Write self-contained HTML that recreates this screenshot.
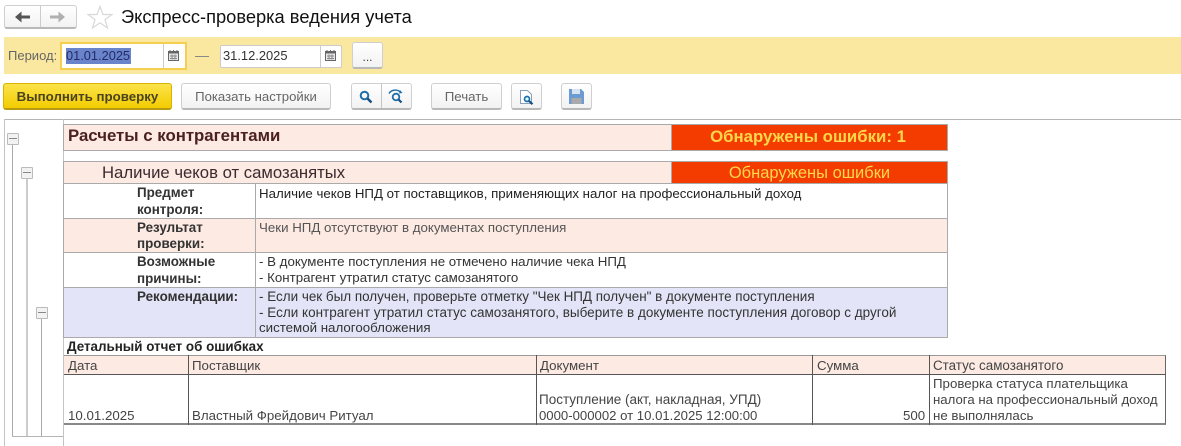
<!DOCTYPE html>
<html><head><meta charset="utf-8">
<style>
html,body{margin:0;padding:0;background:#fff;}
body{width:1181px;height:446px;position:relative;overflow:hidden;font-family:"Liberation Sans",sans-serif;font-size:13.300px;color:#333;}
#w{position:absolute;left:0;top:0;width:1181px;height:446px;filter:blur(0.3px);}
.a{position:absolute;box-sizing:border-box;}
.t{position:absolute;white-space:nowrap;line-height:16px;}
.btn{position:absolute;box-sizing:border-box;background:linear-gradient(#fff,#f2f2f2);border:1px solid #cfcfcf;border-bottom:2px solid #b8b8b8;border-radius:3px;text-align:center;color:#666;}
.b{font-weight:bold;}
.cell{position:absolute;box-sizing:border-box;}
</style></head><body><div id="w">

<!-- nav -->
<div class="btn" style="left:4px;top:5px;width:73px;height:24px;"></div>
<div class="a" style="left:40px;top:6px;width:1px;height:21px;background:#ccc;"></div>
<svg class="a" style="left:14px;top:9px;" width="56" height="16" viewBox="0 0 56 16">
<path d="M1 8L7.500 2.500V6.500H16V9.500H7.500V13.500Z" fill="#555"/>
<path d="M51 8L44.500 2.500V6.500H36V9.500H44.500V13.500Z" fill="#b0b0b0"/>
</svg>
<svg class="a" style="left:87px;top:5px;" width="26" height="24" viewBox="0 0 26 24">
<path d="M13 1.500L16 9.500H25L18 14.500L20.500 23L13 17.800L5.500 23L8 14.500L1 9.500H10Z" fill="#fff" stroke="#d8d8d8" stroke-width="1.200"/>
</svg>
<div class="t" style="left:121px;top:7px;font-size:18.300px;line-height:20px;color:#111;">Экспресс-проверка ведения учета</div>

<!-- yellow band -->
<div class="a" style="left:4px;top:37px;width:1177px;height:37px;background:#fbe8a0;"></div>
<div class="t" style="left:8px;top:48px;color:#666;font-size:13px;">Период:</div>
<div class="a" style="left:60px;top:42px;width:127px;height:28px;background:#fff;border:2px solid #f6cf50;"></div>
<div class="a" style="left:66px;top:48px;width:65px;height:16px;background:#6a84cc;"></div>
<div class="t" style="left:66px;top:48px;color:#232b66;font-size:12.800px;">01.01.2025</div>
<div class="a" style="left:163px;top:44px;width:1px;height:24px;background:#ccc;"></div>
<svg class="a" style="left:167px;top:49px;" width="13" height="13" viewBox="0 0 13 13"><rect x="1.500" y="2.500" width="10" height="9" fill="#e8e8e8" stroke="#666"/><rect x="1.500" y="2.500" width="10" height="2" fill="#666"/><path d="M3 1v2M6.500 1v2M10 1v2" stroke="#666"/><path d="M3 7h7M3 9.500h7M5 5.500v5M8 5.500v5" stroke="#888" stroke-width="1"/></svg>
<div class="a" style="left:195px;top:56px;width:14px;height:1px;background:#888;"></div>
<div class="a" style="left:220px;top:45px;width:122px;height:23px;background:#fff;border:1px solid #ccc;border-radius:2px;"></div>
<div class="t" style="left:223px;top:48px;color:#333;font-size:12.900px;">31.12.2025</div>
<div class="a" style="left:320px;top:46px;width:1px;height:21px;background:#ccc;"></div>
<svg class="a" style="left:324px;top:49px;" width="13" height="13" viewBox="0 0 13 13"><rect x="1.500" y="2.500" width="10" height="9" fill="#e8e8e8" stroke="#666"/><rect x="1.500" y="2.500" width="10" height="2" fill="#666"/><path d="M3 1v2M6.500 1v2M10 1v2" stroke="#666"/><path d="M3 7h7M3 9.500h7M5 5.500v5M8 5.500v5" stroke="#888" stroke-width="1"/></svg>
<div class="btn" style="left:352px;top:42px;width:31px;height:27px;line-height:28px;color:#444;font-size:12px;">...</div>

<!-- toolbar -->
<div class="a b" style="left:3px;top:83px;width:169px;height:27px;background:linear-gradient(#fbe24a,#f3cc00);border:1px solid #d6b400;border-bottom:2px solid #b89b10;border-radius:3px;text-align:center;line-height:25px;color:#4a4320;font-size:13.300px;">Выполнить проверку</div>
<div class="btn" style="left:181px;top:83px;width:150px;height:27px;line-height:25px;font-size:13.150px;">Показать настройки</div>
<div class="btn" style="left:351px;top:83px;width:61px;height:27px;"></div>
<div class="a" style="left:381px;top:84px;width:1px;height:24px;background:#c4c4c4;"></div>
<svg class="a" style="left:358px;top:89px;" width="16" height="16" viewBox="0 0 16 16"><circle cx="6.500" cy="6.500" r="3.800" fill="none" stroke="#1e6fa8" stroke-width="2"/><path d="M9.500 9.500L13.500 13.500" stroke="#164f80" stroke-width="2.400"/></svg>
<svg class="a" style="left:387px;top:88px;" width="18" height="17" viewBox="0 0 18 17"><circle cx="9" cy="9" r="3.300" fill="none" stroke="#1e6fa8" stroke-width="1.800"/><path d="M11.500 11.500L14.500 14.500" stroke="#164f80" stroke-width="2.200"/><path d="M2 5.500C4 2 9 1 13 3.500" fill="none" stroke="#1e6fa8" stroke-width="1.400"/><path d="M13 2L15.500 5L12 5.500Z" fill="#1e6fa8"/></svg>
<div class="btn" style="left:431px;top:83px;width:71px;height:27px;line-height:25px;font-size:13.300px;">Печать</div>
<div class="btn" style="left:511px;top:83px;width:31px;height:27px;"></div>
<svg class="a" style="left:518px;top:89px;" width="18" height="18" viewBox="0 0 18 18"><path d="M2.500 1.500H9.500L13.500 5.500V14.500H2.500Z" fill="#fff" stroke="#8aa0b8"/><circle cx="9" cy="10" r="2.500" fill="#dff" stroke="#1e6fa8" stroke-width="1.700"/><path d="M11 12L14.500 15.200" stroke="#164f80" stroke-width="2.200"/></svg>
<div class="btn" style="left:561px;top:83px;width:31px;height:27px;"></div>
<svg class="a" style="left:568px;top:88px;" width="17" height="17" viewBox="0 0 17 17"><path d="M1 1H13L16 4V16H1Z" fill="#6c9bd2"/><rect x="4" y="1" width="8" height="5" fill="#d5e3f2"/><rect x="3.500" y="10" width="10" height="6" fill="#a9a9ac"/></svg>

<!-- separator and tree -->
<div class="a" style="left:4px;top:119px;width:1177px;height:1px;background:#b5b5b5;"></div>
<div class="a" style="left:4px;top:119px;width:1px;height:327px;background:#c4c4c4;"></div>
<div class="a" style="left:63px;top:119px;width:1px;height:327px;background:#c4c4c4;"></div>
<div class="a" style="left:12px;top:436px;width:51px;height:1px;background:#b5b5b5;"></div>
<div class="a" style="left:12px;top:145px;width:1px;height:291px;background:#aaa;"></div>
<div class="a" style="left:26px;top:179px;width:2px;height:257px;background:#ccc;"></div>
<div class="a" style="left:41px;top:318px;width:1px;height:118px;background:#aaa;"></div>
<div class="a" style="left:7px;top:133px;width:12px;height:12px;background:#f2f2f2;border:1px solid #bbb;border-radius:1px;"><div class="a" style="left:1px;top:4px;width:8px;height:1px;background:#888;"></div></div>
<div class="a" style="left:21px;top:167px;width:12px;height:12px;background:#f2f2f2;border:1px solid #bbb;border-radius:1px;"><div class="a" style="left:1px;top:4px;width:8px;height:1px;background:#888;"></div></div>
<div class="a" style="left:36px;top:307px;width:12px;height:12px;background:#f2f2f2;border:1px solid #bbb;border-radius:1px;"><div class="a" style="left:1px;top:4px;width:8px;height:1px;background:#888;"></div></div>

<!-- section 1 -->
<div class="cell" style="left:63px;top:124px;width:609px;height:27px;background:#fdeae3;border:1px solid #aaa;"></div>
<div class="t b" style="left:68px;top:127px;font-size:16.800px;line-height:18px;color:#4a2020;">Расчеты с контрагентами</div>
<div class="cell" style="left:671px;top:124px;width:277px;height:27px;background:#f43c00;border:1px solid #aaa;padding-right:3px;text-align:center;color:#ffd84a;font-size:16.800px;font-weight:bold;line-height:24px;">Обнаружены ошибки: 1</div>

<!-- section 2 -->
<div class="cell" style="left:63px;top:161px;width:609px;height:23px;background:#fdeae3;border:1px solid #aaa;"></div>
<div class="t" style="left:102px;top:164px;font-size:16.700px;line-height:18px;color:#3c2a30;">Наличие чеков от самозанятых</div>
<div class="cell" style="left:671px;top:161px;width:277px;height:23px;background:#f43c00;border:1px solid #aaa;text-align:center;color:#ffd84a;font-size:16.500px;line-height:22px;">Обнаружены ошибки</div>

<!-- rows -->
<div class="cell" style="left:63px;top:183px;width:885px;height:36px;background:#fff;border:1px solid #aaa;"></div>
<div class="cell" style="left:63px;top:218px;width:885px;height:35px;background:#fdeae3;border:1px solid #aaa;"></div>
<div class="cell" style="left:63px;top:252px;width:885px;height:36px;background:#fff;border:1px solid #aaa;"></div>
<div class="cell" style="left:63px;top:287px;width:885px;height:51px;background:#e3e4f7;border:1px solid #aaa;"></div>
<div class="a" style="left:255px;top:183px;width:1px;height:155px;background:#aaa;"></div>

<div class="t b" style="left:137px;top:185px;font-size:13.400px;">Предмет</div>
<div class="t b" style="left:137px;top:202px;font-size:13.400px;">контроля:</div>
<div class="t b" style="left:137px;top:220px;font-size:13.400px;">Результат</div>
<div class="t b" style="left:137px;top:236px;font-size:13.400px;">проверки:</div>
<div class="t b" style="left:137px;top:254px;font-size:13.400px;">Возможные</div>
<div class="t b" style="left:137px;top:271px;font-size:13.400px;">причины:</div>
<div class="t b" style="left:137px;top:289px;font-size:13.400px;">Рекомендации:</div>

<div class="t" style="left:259px;top:186px;color:#222;font-size:13.270px;">Наличие чеков НПД от поставщиков, применяющих налог на профессиональный доход</div>
<div class="t" style="left:259px;top:220px;color:#555;font-size:13.300px;">Чеки НПД отсутствуют в документах поступления</div>
<div class="t" style="left:259px;top:254px;font-size:13.300px;">- В документе поступления не отмечено наличие чека НПД</div>
<div class="t" style="left:259px;top:270px;font-size:13.300px;">- Контрагент утратил статус самозанятого</div>
<div class="t" style="left:259px;top:289px;font-size:13.450px;">- Если чек был получен, проверьте отметку "Чек НПД получен" в документе поступления</div>
<div class="t" style="left:259px;top:305px;font-size:13.500px;">- Если контрагент утратил статус самозанятого, выберите в документе поступления договор с другой</div>
<div class="t" style="left:259px;top:320px;font-size:13.300px;">системой налогообложения</div>

<div class="t b" style="left:67px;top:339px;color:#222;font-size:13.400px;">Детальный отчет об ошибках</div>

<!-- detail table -->
<div class="cell" style="left:64px;top:355px;width:1102px;height:20px;background:#fdeae3;border-top:1px solid #999;border-bottom:1px solid #555;border-right:1px solid #666;"></div>
<div class="cell" style="left:64px;top:375px;width:1102px;height:50px;background:#fff;border-bottom:2px solid #888;border-right:1px solid #666;"></div>
<div class="a" style="left:188px;top:355px;width:1px;height:70px;background:#555;"></div>
<div class="a" style="left:536px;top:355px;width:1px;height:70px;background:#555;"></div>
<div class="a" style="left:812px;top:355px;width:1px;height:70px;background:#555;"></div>
<div class="a" style="left:929px;top:355px;width:1px;height:70px;background:#555;"></div>

<div class="t" style="left:68px;top:358px;color:#444;">Дата</div>
<div class="t" style="left:192px;top:358px;color:#444;">Поставщик</div>
<div class="t" style="left:540px;top:358px;color:#444;">Документ</div>
<div class="t" style="left:817px;top:358px;color:#444;">Сумма</div>
<div class="t" style="left:933px;top:358px;color:#444;font-size:13.400px;">Статус самозанятого</div>

<div class="t" style="left:68px;top:408px;color:#444;">10.01.2025</div>
<div class="t" style="left:192px;top:408px;color:#444;">Властный Фрейдович Ритуал</div>
<div class="t" style="left:539px;top:392px;color:#444;font-size:13.500px;">Поступление (акт, накладная, УПД)</div>
<div class="t" style="left:539px;top:408px;color:#444;font-size:13.150px;">0000-000002 от 10.01.2025 12:00:00</div>
<div class="t" style="left:903px;top:408px;color:#444;">500</div>
<div class="t" style="left:933px;top:376px;color:#444;">Проверка статуса плательщика</div>
<div class="t" style="left:933px;top:392px;color:#444;font-size:13.200px;">налога на профессиональный доход</div>
<div class="t" style="left:933px;top:408px;color:#444;">не выполнялась</div>

</div></body></html>
